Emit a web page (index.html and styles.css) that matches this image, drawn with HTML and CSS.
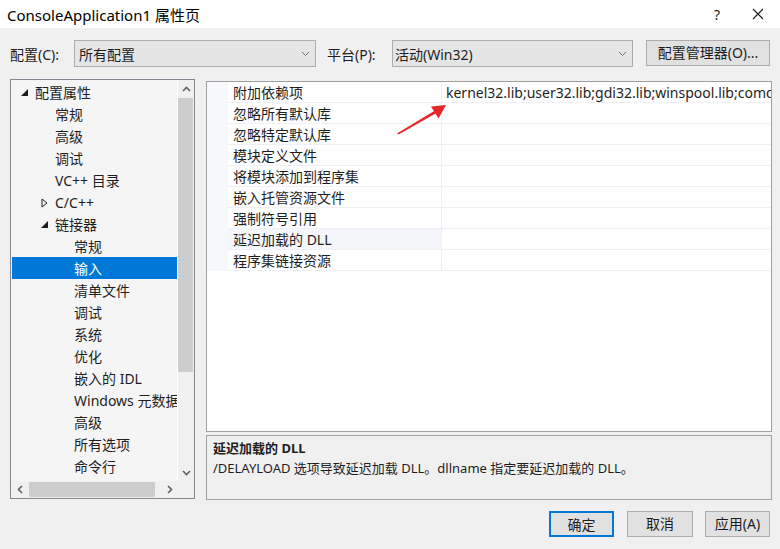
FILE: index.html
```html
<!DOCTYPE html>
<html lang="zh-CN">
<head>
<meta charset="utf-8">
<title>ConsoleApplication1 属性页</title>
<link rel="stylesheet" href="styles.css">
</head>
<body>
<div class="window">
  <div class="titlebar">
    <span class="title">ConsoleApplication1 属性页</span>
    <span class="tb-help">?</span>
    <span class="tb-close"><svg width="12" height="12" viewBox="0 0 12 12"><path d="M1 1L11 11M11 1L1 11" stroke="#1a1a1a" stroke-width="1.1" fill="none"/></svg></span>
  </div>

  <div class="toolbar">
    <span class="lbl lbl-config">配置(C):</span>
    <div class="select sel-config"><span>所有配置</span><svg class="chev" width="9" height="6" viewBox="0 0 9 6"><path d="M1 1L4.5 4.5L8 1" stroke="#707070" stroke-width="1" fill="none"/></svg></div>
    <span class="lbl lbl-platform">平台(P):</span>
    <div class="select sel-platform"><span>活动(Win32)</span><svg class="chev" width="9" height="6" viewBox="0 0 9 6"><path d="M1 1L4.5 4.5L8 1" stroke="#707070" stroke-width="1" fill="none"/></svg></div>
    <button class="btn btn-mgr">配置管理器(O)...</button>
  </div>

  <div class="main">
    <div class="tree">
      <div class="tree-body">
        <div class="tree-list">
          <div class="node l0"><svg class="exp" width="7" height="7" viewBox="0 0 7 7"><path d="M7 0L7 7L0 7Z" fill="#1e1e1e"/></svg><span>配置属性</span></div>
          <div class="node l1">常规</div>
          <div class="node l1">高级</div>
          <div class="node l1">调试</div>
          <div class="node l1">VC++ 目录</div>
          <div class="node l1 has"><svg class="col" width="7" height="10" viewBox="0 0 7 10"><path d="M1 1L6 5L1 9Z" fill="none" stroke="#1e1e1e" stroke-width="1"/></svg><span>C/C++</span></div>
          <div class="node l1 has"><svg class="exp" width="7" height="7" viewBox="0 0 7 7"><path d="M7 0L7 7L0 7Z" fill="#1e1e1e"/></svg><span>链接器</span></div>
          <div class="node l2">常规</div>
          <div class="node l2 sel">输入</div>
          <div class="node l2">清单文件</div>
          <div class="node l2">调试</div>
          <div class="node l2">系统</div>
          <div class="node l2">优化</div>
          <div class="node l2">嵌入的 IDL</div>
          <div class="node l2">Windows 元数据</div>
          <div class="node l2">高级</div>
          <div class="node l2">所有选项</div>
          <div class="node l2">命令行</div>
        </div>
        <div class="vscroll">
          <div class="sb-btn"><svg width="9" height="6" viewBox="0 0 9 6"><path d="M1 5L4.5 1.5L8 5" stroke="#606060" stroke-width="1.6" fill="none"/></svg></div>
          <div class="vtrack"><div class="vthumb"></div></div>
          <div class="sb-btn"><svg width="9" height="6" viewBox="0 0 9 6"><path d="M1 1L4.5 4.5L8 1" stroke="#606060" stroke-width="1.6" fill="none"/></svg></div>
        </div>
      </div>
      <div class="hrow">
        <div class="hscroll">
          <div class="hb-btn"><svg width="6" height="9" viewBox="0 0 6 9"><path d="M5 1L1.5 4.5L5 8" stroke="#606060" stroke-width="1.6" fill="none"/></svg></div>
          <div class="htrack"><div class="hthumb"></div></div>
          <div class="hb-btn"><svg width="6" height="9" viewBox="0 0 6 9"><path d="M1 1L4.5 4.5L1 8" stroke="#606060" stroke-width="1.6" fill="none"/></svg></div>
        </div>
        <div class="corner"></div>
      </div>
    </div>

    <div class="right">
      <div class="grid">
        <div class="row"><div class="gutter"></div><div class="name">附加依赖项</div><div class="value">kernel32.lib;user32.lib;gdi32.lib;winspool.lib;comd</div></div>
        <div class="row"><div class="gutter"></div><div class="name">忽略所有默认库</div><div class="value"></div></div>
        <div class="row"><div class="gutter"></div><div class="name">忽略特定默认库</div><div class="value"></div></div>
        <div class="row"><div class="gutter"></div><div class="name">模块定义文件</div><div class="value"></div></div>
        <div class="row"><div class="gutter"></div><div class="name">将模块添加到程序集</div><div class="value"></div></div>
        <div class="row"><div class="gutter"></div><div class="name">嵌入托管资源文件</div><div class="value"></div></div>
        <div class="row"><div class="gutter"></div><div class="name">强制符号引用</div><div class="value"></div></div>
        <div class="row cur"><div class="gutter"></div><div class="name">延迟加载的 DLL</div><div class="value"></div></div>
        <div class="row"><div class="gutter"></div><div class="name">程序集链接资源</div><div class="value"></div></div>
      </div>
      <div class="desc">
        <div class="desc-title">延迟加载的 DLL</div>
        <div class="desc-text">/DELAYLOAD 选项导致延迟加载 DLL。dllname 指定要延迟加载的 DLL。</div>
      </div>
    </div>
  </div>

  <div class="footer">
    <button class="btn btn-ok">确定</button>
    <button class="btn btn-cancel">取消</button>
    <button class="btn btn-apply">应用(A)</button>
  </div>

  <svg class="annot" width="780" height="549" viewBox="0 0 780 549">
    <path d="M397 133.5L435 110.5L436.5 113L398.5 134.5Z" fill="#e8262a"/>
    <path d="M446 105L431 106.5L438.5 118.5Z" fill="#e8262a"/>
  </svg>
</div>
</body>
</html>
```

FILE: styles.css
```css
* { box-sizing: border-box; }
html, body { margin: 0; padding: 0; }
body {
  width: 780px;
  height: 549px;
  overflow: hidden;
  background: #f0f0f0;
  font-family: "Noto Sans", "Noto Sans CJK SC", sans-serif;
  font-size: 14px;
  color: #1e1e1e;
}
.window { position: relative; width: 780px; height: 549px; }

.titlebar {
  height: 28px;
  background: #ffffff;
  display: flex;
  align-items: center;
  padding-left: 7px;
}
.title { font-size: 15px; color: #000; flex: 1; white-space: nowrap; }
.tb-help { width: 20px; text-align: center; font-size: 14px; color: #1a1a1a; margin-right: 25px; }
.tb-close { width: 14px; display: flex; align-items: center; margin-right: 14px; }

.toolbar {
  display: flex;
  align-items: center;
  padding: 12px 10px 12px 10px;
  height: 51px;
}
.lbl { white-space: nowrap; }
.lbl-config { width: 64px; }
.lbl-platform { width: 65px; margin-left: 11px; }
.select {
  height: 27px;
  background: #e5e5e5;
  border: 1px solid #adadad;
  display: flex;
  align-items: center;
  justify-content: space-between;
  padding: 0 5px 0 4px;
}
.sel-config { width: 242px; }
.sel-platform { width: 241px; padding-left: 2px; }
.chev { display: block; }
.btn {
  font-family: inherit;
  font-size: 14px;
  color: #1e1e1e;
  background: #e1e1e1;
  border: 1px solid #adadad;
  padding: 0;
  height: 26px;
  line-height: 24px;
}
.btn-mgr { width: 124px; margin-left: 13px; margin-top: -1px; }

.main {
  display: flex;
  height: 421px;
  padding-left: 10px;
}
.tree {
  width: 185px;
  height: 420px;
  border: 1px solid #828790;
  background: #f5f5f5;
  display: flex;
  flex-direction: column;
}
.tree-body { display: flex; height: 401px; }
.tree-list {
  width: 167px;
  padding: 1px 0 0 1px;
  border-right: 1px solid #ffffff;
  overflow: hidden;
}
.node {
  height: 22px;
  line-height: 22px;
  white-space: nowrap;
  display: flex;
  align-items: center;
  padding-top: 1px;
}
.node.l0 { padding-left: 9px; }
.node.l1 { padding-left: 43px; }
.node.l1.has { padding-left: 29px; }
.node.l2 { padding-left: 62px; }
.node .exp { margin-right: 7px; }
.node .col { margin-right: 7px; }
.node.sel { background: #0078d7; color: #ffffff; }

.vscroll {
  width: 16px;
  background: #f0f0f0;
  display: flex;
  flex-direction: column;
}
.sb-btn { height: 17px; display: flex; align-items: center; justify-content: center; }
.vtrack { flex: 1; padding-top: 1px; }
.vthumb { height: 274px; background: #cdcdcd; margin: 0 1px 0 0; }

.hrow { display: flex; height: 17px; }
.hscroll {
  width: 167px;
  background: #f0f0f0;
  display: flex;
}
.hb-btn { width: 17px; display: flex; align-items: center; justify-content: center; }
.htrack { flex: 1; padding: 1px 0 1px 1px; }
.hthumb { width: 126px; height: 15px; background: #cdcdcd; }
.corner { width: 16px; background: #f0f0f0; }

.right {
  margin-left: 11px;
  width: 566px;
  padding-top: 2px;
  display: flex;
  flex-direction: column;
}
.grid {
  height: 351px;
  border: 1px solid #a0a0a0;
  background: #ffffff;
  overflow: hidden;
}
.row {
  display: flex;
  height: 21px;
}
.gutter { width: 21px; flex-shrink: 0; background: #f7f8fb; }
.name {
  width: 214px;
  flex-shrink: 0;
  padding: 2px 0 0 5px;
  line-height: 18px;
  border-right: 1px solid #eef0f5;
  border-bottom: 1px solid #eef0f5;
  white-space: nowrap;
}
.row.cur .name { background: #f5f6fa; }
.value {
  flex: 1;
  min-width: 0;
  padding: 2px 0 0 4px;
  line-height: 18px;
  border-bottom: 1px solid #eef0f5;
  white-space: nowrap;
  overflow: hidden;
}
.desc {
  margin-top: 3px;
  height: 65px;
  border: 1px solid #a0a0a0;
  background: #f0f0f0;
  padding: 2px 0 0 6px;
  font-size: 13px;
}
.desc-title { font-weight: bold; line-height: 20px; }
.desc-text { line-height: 21px; }

.footer {
  display: flex;
  justify-content: flex-end;
  padding: 11px 10px 0 0;
}
.btn-ok { width: 65px; border: 2px solid #0078d7; }
.btn-cancel { width: 66px; margin-left: 13px; }
.btn-apply { width: 65px; margin-left: 12px; }

.annot { position: absolute; left: 0; top: 0; pointer-events: none; }
```
